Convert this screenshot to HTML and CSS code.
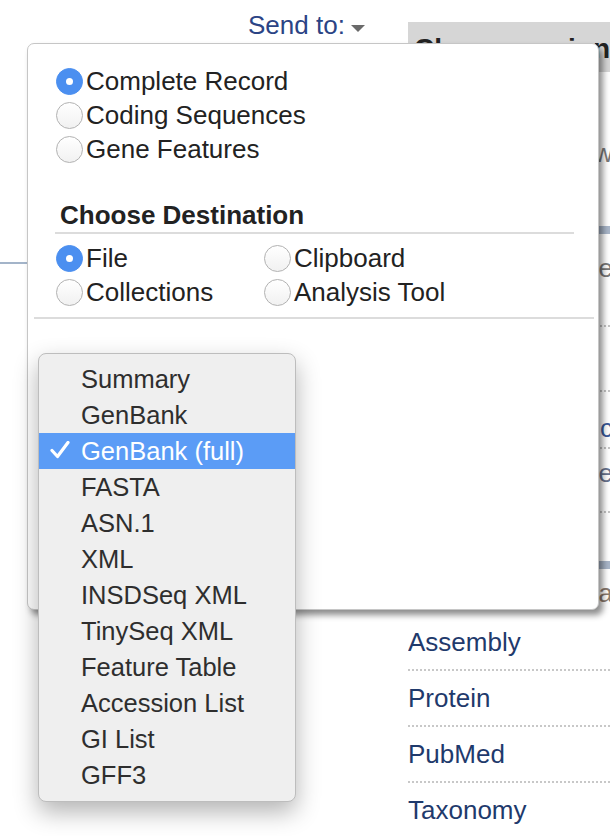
FILE: index.html
```html
<!DOCTYPE html>
<html>
<head>
<meta charset="utf-8">
<link rel="stylesheet" href="styles.css">
</head>
<body>
<div class="page">
  <div class="main">
    <div class="toolbar"><span class="sendto">Send to:</span><span class="caret"></span></div>
    <div class="rule-left"></div>
  </div>
  <aside class="side">
    <div class="side-head">Change region shown</div>
    <div class="side-fill">
      <div class="srow s1 muted">Customize view</div>
      <div class="sbar b1"></div>
      <div class="srow s2 muted">Sequence</div>
      <div class="sdot d1"></div>
      <div class="sdot d2"></div>
      <div class="srow s3 blue">Graphic</div>
      <div class="sdot d3"></div>
      <div class="srow s4 slate">Sequence</div>
      <div class="sdot d4"></div>
      <div class="sbar b2"></div>
      <div class="srow s5 brown">Data</div>
    </div>
    <ul class="links">
      <li>Assembly</li>
      <li>Protein</li>
      <li>PubMed</li>
      <li>Taxonomy</li>
    </ul>
  </aside>

  <div class="panel">
    <div class="opts">
      <label class="opt"><span class="radio on"></span>Complete Record</label>
      <label class="opt"><span class="radio"></span>Coding Sequences</label>
      <label class="opt"><span class="radio"></span>Gene Features</label>
    </div>
    <div class="dest-head">Choose Destination</div>
    <div class="dest">
      <label class="opt"><span class="radio on"></span>File</label>
      <label class="opt"><span class="radio"></span>Clipboard</label>
      <label class="opt"><span class="radio"></span>Collections</label>
      <label class="opt"><span class="radio"></span>Analysis Tool</label>
    </div>
    <div class="panel-rule"></div>
  </div>

  <ul class="menu">
    <li>Summary</li>
    <li>GenBank</li>
    <li class="sel"><svg class="check" width="20" height="18" viewBox="0 0 20 18"><path d="M2 9.5 L7.5 15.5 L18 1.5" fill="none" stroke="#fff" stroke-width="3.2" stroke-linecap="round" stroke-linejoin="round"/></svg>GenBank (full)</li>
    <li>FASTA</li>
    <li>ASN.1</li>
    <li>XML</li>
    <li>INSDSeq XML</li>
    <li>TinySeq XML</li>
    <li>Feature Table</li>
    <li>Accession List</li>
    <li>GI List</li>
    <li>GFF3</li>
  </ul>
</div>
</body>
</html>
```

FILE: styles.css
```css
* { box-sizing: border-box; }
html, body { margin: 0; padding: 0; background: #fff; }
body { font-family: "Liberation Sans", Arial, sans-serif; font-size: 26px; color: #222; }

.page { position: relative; width: 610px; height: 836px; overflow: hidden; display: flex; }

.main { width: 408px; flex: none; padding-top: 10px; }
.toolbar { padding-left: 248px; height: 30px; line-height: 30px; display: flex; align-items: center; }
.sendto { color: #2b4485; }
.caret { width: 0; height: 0; border-top: 7px solid #6a6a6a; border-left: 7px solid transparent; border-right: 7px solid transparent; margin-left: 6px; margin-top: 6px; }
.rule-left { margin-top: 222px; height: 2px; width: 120px; background: #a3b4c9; }

.side { flex: 1; padding-top: 22px; overflow: hidden; }
.side-head { height: 50px; background: #d6d6d6; font-weight: bold; font-size: 28px; line-height: 54px; padding-left: 6px; white-space: nowrap; color: #222; overflow: hidden; }
.side-fill { display: flow-root; height: 543px; overflow: hidden; }
.srow { height: 36px; line-height: 36px; white-space: nowrap; display: flex; justify-content: flex-end; overflow: hidden; margin-right: -3px; }
.muted { color: #7a7a7a; }
.blue { color: #3a5a9a; }
.slate { color: #6a7590; }
.brown { color: #8b7b70; }
.sbar { height: 8px; background: #a9b6c9; }
.sdot { border-top: 2px dotted #c4c4c4; }
.s1 { margin-top: 63px; }
.b1 { margin-top: 55px; }
.s2 { margin-top: 16px; }
.d1 { margin-top: 39px; }
.d2 { margin-top: 63px; }
.s3 { margin-top: 18px; }
.d3 { margin-top: 1px; }
.s4 { margin-top: 6px; }
.d4 { margin-top: 20px; }
.b2 { margin-top: 48px; }
.s5 { margin-top: 6px; }

.links { list-style: none; margin: 0; padding: 0; }
.links li { height: 56px; line-height: 54px; border-bottom: 2px dotted #c8c8c8; color: #1f3a6c; white-space: nowrap; }

.panel { position: absolute; left: 27px; top: 43px; width: 572px; height: 567px; background: #fff; border: 1px solid #c6c6c6; border-radius: 7px; box-shadow: 4px 5px 6px rgba(0,0,0,0.45); padding: 20px 0 0 28px; }
.opts { display: flex; flex-direction: column; }
.opt { display: flex; align-items: center; height: 34px; line-height: 34px; white-space: nowrap; color: #222; }
.radio { width: 27px; height: 27px; border-radius: 50%; border: 1px solid #b2b2b2; background: linear-gradient(#ffffff, #f1f1f1); margin-right: 3px; flex: none; display: flex; align-items: center; justify-content: center; }
.radio.on { background: #4b8ff0; border-color: #4b8ff0; }
.radio.on::after { content: ""; width: 7px; height: 7px; border-radius: 50%; background: #fff; }

.dest-head { margin: 32px 24px 0 -1px; padding-left: 5px; height: 36px; line-height: 34px; font-weight: bold; border-bottom: 2px solid #dcdcdc; color: #222; }
.dest { display: grid; grid-template-columns: 208px 1fr; margin-top: 7px; }
.panel-rule { margin: 8px 4px 0 -22px; height: 2px; background: #dcdcdc; }

.menu { position: absolute; left: 38px; top: 353px; width: 258px; height: 449px; margin: 0; padding: 7px 0; list-style: none; background: #efefef; border: 1px solid #bdbdbd; border-radius: 8px; box-shadow: 0 10px 24px rgba(0,0,0,0.3); }
.menu li { position: relative; height: 36px; line-height: 36px; padding-left: 42px; color: #2e2e2e; white-space: nowrap; font-size: 25.5px; }
.menu li.sel { background: #5b9cf6; color: #fff; }
.check { position: absolute; left: 11px; top: 8px; }
```
